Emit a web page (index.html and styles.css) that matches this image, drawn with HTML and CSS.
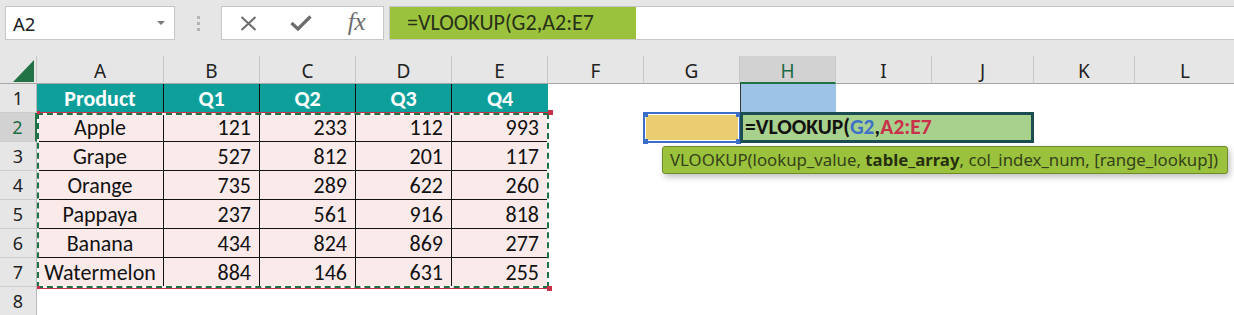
FILE: index.html
```html
<!DOCTYPE html>
<html lang="en">
<head>
    <title>VLOOKUP - Excel</title>
    <link rel="stylesheet" href="styles.css">
</head>
<body>
    <div class="toolbar">
        <div class="name-box">A2<span class="caret"></span></div>
        <div class="grip"><i></i><i></i><i></i></div>
        <div class="fx-buttons">
            <span class="btn">
                <svg width="17" height="15" viewBox="0 0 17 15"><path d="M1.5 1 L15.5 14 M15.5 1 L1.5 14" stroke="#6d6d6d" stroke-width="2" fill="none"/></svg>
            </span>
            <span class="btn">
                <svg width="22" height="16" viewBox="0 0 22 16"><path d="M1.5 8 L8 14 L20.5 1.5" stroke="#6d6d6d" stroke-width="3.2" fill="none"/></svg>
            </span>
            <span class="btn fx">fx</span>
        </div>
        <div class="formula-input"><span class="formula-sel">=VLOOKUP(G2,A2:E7</span></div>
    </div>

    <div class="sheet">
        <!-- column headers -->
        <div class="corner"><svg width="37" height="28" viewBox="0 0 37 28"><polygon points="34,4 34,26 13,26" fill="#217346"/></svg></div>
        <div class="ch">A</div>
        <div class="ch">B</div>
        <div class="ch">C</div>
        <div class="ch">D</div>
        <div class="ch">E</div>
        <div class="ch">F</div>
        <div class="ch">G</div>
        <div class="ch active">H</div>
        <div class="ch">I</div>
        <div class="ch">J</div>
        <div class="ch">K</div>
        <div class="ch">L</div>

        <!-- row 1 -->
        <div class="rh">1</div>
        <div class="th">Product</div>
        <div class="th">Q1</div>
        <div class="th">Q2</div>
        <div class="th">Q3</div>
        <div class="th last">Q4</div>
        <div class="c"></div><div class="c"></div><div class="c h1"></div><div class="c"></div><div class="c"></div><div class="c"></div><div class="c"></div>

        <!-- row 2 -->
        <div class="rh active">2</div>
        <div class="td name">Apple</div>
        <div class="td">121</div>
        <div class="td">233</div>
        <div class="td">112</div>
        <div class="td">993</div>
        <div class="c"></div><div class="c"></div><div class="c"></div><div class="c"></div><div class="c"></div><div class="c"></div><div class="c"></div>

        <!-- row 3 -->
        <div class="rh">3</div>
        <div class="td name">Grape</div>
        <div class="td">527</div>
        <div class="td">812</div>
        <div class="td">201</div>
        <div class="td">117</div>
        <div class="c"></div><div class="c"></div><div class="c"></div><div class="c"></div><div class="c"></div><div class="c"></div><div class="c"></div>

        <!-- row 4 -->
        <div class="rh">4</div>
        <div class="td name">Orange</div>
        <div class="td">735</div>
        <div class="td">289</div>
        <div class="td">622</div>
        <div class="td">260</div>
        <div class="c"></div><div class="c"></div><div class="c"></div><div class="c"></div><div class="c"></div><div class="c"></div><div class="c"></div>

        <!-- row 5 -->
        <div class="rh">5</div>
        <div class="td name">Pappaya</div>
        <div class="td">237</div>
        <div class="td">561</div>
        <div class="td">916</div>
        <div class="td">818</div>
        <div class="c"></div><div class="c"></div><div class="c"></div><div class="c"></div><div class="c"></div><div class="c"></div><div class="c"></div>

        <!-- row 6 -->
        <div class="rh">6</div>
        <div class="td name">Banana</div>
        <div class="td">434</div>
        <div class="td">824</div>
        <div class="td">869</div>
        <div class="td">277</div>
        <div class="c"></div><div class="c"></div><div class="c"></div><div class="c"></div><div class="c"></div><div class="c"></div><div class="c"></div>

        <!-- row 7 -->
        <div class="rh">7</div>
        <div class="td name">Watermelon</div>
        <div class="td">884</div>
        <div class="td">146</div>
        <div class="td">631</div>
        <div class="td">255</div>
        <div class="c"></div><div class="c"></div><div class="c"></div><div class="c"></div><div class="c"></div><div class="c"></div><div class="c"></div>

        <!-- row 8 -->
        <div class="rh">8</div>
        <div class="c"></div><div class="c"></div><div class="c"></div><div class="c"></div><div class="c"></div><div class="c"></div>
        <div class="c"></div><div class="c"></div><div class="c"></div><div class="c"></div><div class="c"></div><div class="c"></div>

        <!-- overlays: copy marquee, references, edit box, tooltip -->
        <div class="marquee">
            <span class="handle tl"></span><span class="handle tr"></span>
            <span class="handle bl"></span><span class="handle br"></span>
        </div>
        <div class="ref-g2">
            <span class="handle tl"></span><span class="handle tr"></span>
            <span class="handle bl"></span><span class="handle br"></span>
        </div>
        <div class="edit-box">=VLOOKUP(<span class="ref-blue">G2</span>,<span class="ref-red">A2:E7</span></div>
        <div class="tooltip">VLOOKUP(lookup_value, <b>table_array</b>, col_index_num, [range_lookup])</div>
    </div>
</body>
</html>
```

FILE: styles.css
```css
body {
    margin: 0;
    background: #e6e6e6;
    font-family: Carlito, Lato, sans-serif;
    overflow: hidden;
}

/* formula bar */
.toolbar {
    display: flex;
    align-items: flex-start;
    height: 56px;
    padding: 6px 0 0 5px;
    box-sizing: border-box;
}

.name-box {
    width: 170px;
    height: 34px;
    box-sizing: border-box;
    border: 1px solid #c6c6c6;
    background: #fff;
    display: flex;
    align-items: center;
    justify-content: space-between;
    padding: 0 9px 0 7px;
    font: 18.5px "Noto Sans", sans-serif;
    color: #222;
}

.caret {
    width: 0;
    height: 0;
    border-left: 4px solid transparent;
    border-right: 4px solid transparent;
    border-top: 4px solid #7a7a7a;
}

.grip {
    width: 46px;
    display: flex;
    flex-direction: column;
    align-items: center;
    gap: 3px;
    padding-top: 10px;
}

.grip i {
    width: 3px;
    height: 3px;
    background: #b4b4b4;
}

.fx-buttons {
    width: 163px;
    height: 34px;
    box-sizing: border-box;
    border: 1px solid #c6c6c6;
    background: #fff;
    display: flex;
    align-items: center;
}

.btn {
    width: 53px;
    display: flex;
    justify-content: center;
    align-items: center;
}

.btn.fx {
    font: italic 25px "Liberation Serif", serif;
    color: #6d6d6d;
    margin-top: -3px;
    padding-left: 3px;
}

.formula-input {
    flex: 1;
    height: 34px;
    margin-left: 5px;
    box-sizing: border-box;
    border: 1px solid #c6c6c6;
    border-right: none;
    background: #fff;
}

.formula-sel {
    display: block;
    width: 229px;
    height: 32px;
    padding-left: 17px;
    background: #9bc23c;
    color: #27311a;
    font-size: 22px;
    line-height: 32px;
}

/* sheet grid */
.sheet {
    position: relative;
    display: grid;
    grid-template-columns: 37px 127px repeat(8, 96px) 102px 101px 101px;
    grid-template-rows: 28px repeat(8, 29px);
    background: #fff;
    font-size: 22px;
    color: #111;
}

.sheet > div {
    box-sizing: border-box;
}

.corner {
    background: #e6e6e6;
    border-right: 1px solid #c8c8c8;
    border-bottom: 1px solid #a6a6a6;
}

.corner svg {
    display: block;
}

.ch,
.rh {
    display: flex;
    align-items: center;
    justify-content: center;
    background: #e6e6e6;
    font-family: "Noto Sans", sans-serif;
    color: #222;
}

.ch {
    font-size: 19px;
    border-right: 1px solid #c8c8c8;
    border-bottom: 1px solid #a6a6a6;
    padding-top: 3px;
}

.rh {
    font-size: 18px;
    border-right: 1px solid #b9b9b9;
    border-bottom: 1px solid #cdcdcd;
}

.ch.active {
    background: #d2d2d2;
    color: #1d6b45;
    border-bottom: 2px solid #217346;
}

.rh.active {
    background: #d2d2d2;
    color: #1d6b45;
    border-right: 2px solid #217346;
}

.th {
    display: flex;
    align-items: center;
    justify-content: center;
    background: #0e9f9b;
    color: #fff;
    font-weight: bold;
    border-right: 1px solid #111;
}

.th.last {
    border-right: none;
}

.td {
    display: flex;
    align-items: center;
    justify-content: flex-end;
    padding-right: 8px;
    background: #fbeaea;
    border-right: 1px solid #111;
    border-bottom: 1px solid #111;
}

.td.name {
    justify-content: center;
    padding-right: 0;
}

.h1 {
    background: #9dc3e6;
    border-left: 1px solid #333;
}

/* overlays */
.marquee {
    position: absolute;
    left: 37px;
    top: 56px;
    width: 512px;
    height: 177px;
    box-sizing: border-box;
    border-top: 1px solid #c9304a;
    border-bottom: 1px solid #c9304a;
}

.marquee::before {
    content: "";
    position: absolute;
    inset: 0 0 0 0;
    border: 2px solid #fff;
}

.marquee::after {
    content: "";
    position: absolute;
    inset: 0 0 0 0;
    border: 2px dashed #1e7145;
}

.handle {
    position: absolute;
    width: 5px;
    height: 5px;
    z-index: 1;
}

.marquee .handle {
    background: #c9304a;
}

.marquee .tl { left: 0; top: -2px; width: 3px; height: 3px; }
.marquee .bl { left: 0; bottom: -1px; width: 3px; height: 3px; }
.marquee .tr { right: -4px; top: -3px; }
.marquee .br { right: -3px; bottom: -3px; }

.ref-g2 {
    position: absolute;
    left: 643px;
    top: 56px;
    width: 98px;
    height: 31px;
    box-sizing: border-box;
    border: 2px solid #3b6fc7;
    background: #e9cd70;
    box-shadow: inset 0 0 0 1px #fff;
}

.ref-g2 .handle {
    background: #3b6fc7;
}

.ref-g2 .tl { left: -2px; top: -2px; }
.ref-g2 .bl { left: -2px; bottom: -3px; }
.ref-g2 .tr { right: -2px; top: -2px; }
.ref-g2 .br { right: -2px; bottom: -3px; }

.edit-box {
    position: absolute;
    left: 740px;
    top: 56px;
    width: 294px;
    height: 31px;
    box-sizing: border-box;
    border: 3px solid #1b4d52;
    background: #a9d18e;
    padding-left: 2px;
    font-size: 21.5px;
    font-weight: bold;
    line-height: 25px;
    color: #111;
    z-index: 2;
}

.ref-blue {
    color: #3f72c6;
}

.ref-red {
    color: #c9304a;
}

.tooltip {
    position: absolute;
    left: 662px;
    top: 90px;
    width: 566px;
    height: 28px;
    box-sizing: border-box;
    padding-left: 7px;
    background: #9bc23c;
    border: 1px solid #6e8b2a;
    border-radius: 3px;
    box-shadow: 2px 3px 6px rgba(0, 0, 0, 0.25);
    font: 16.8px "Noto Sans", sans-serif;
    line-height: 25px;
    color: #34411a;
    white-space: nowrap;
    z-index: 3;
}

.tooltip b {
    color: #26300f;
}
```
